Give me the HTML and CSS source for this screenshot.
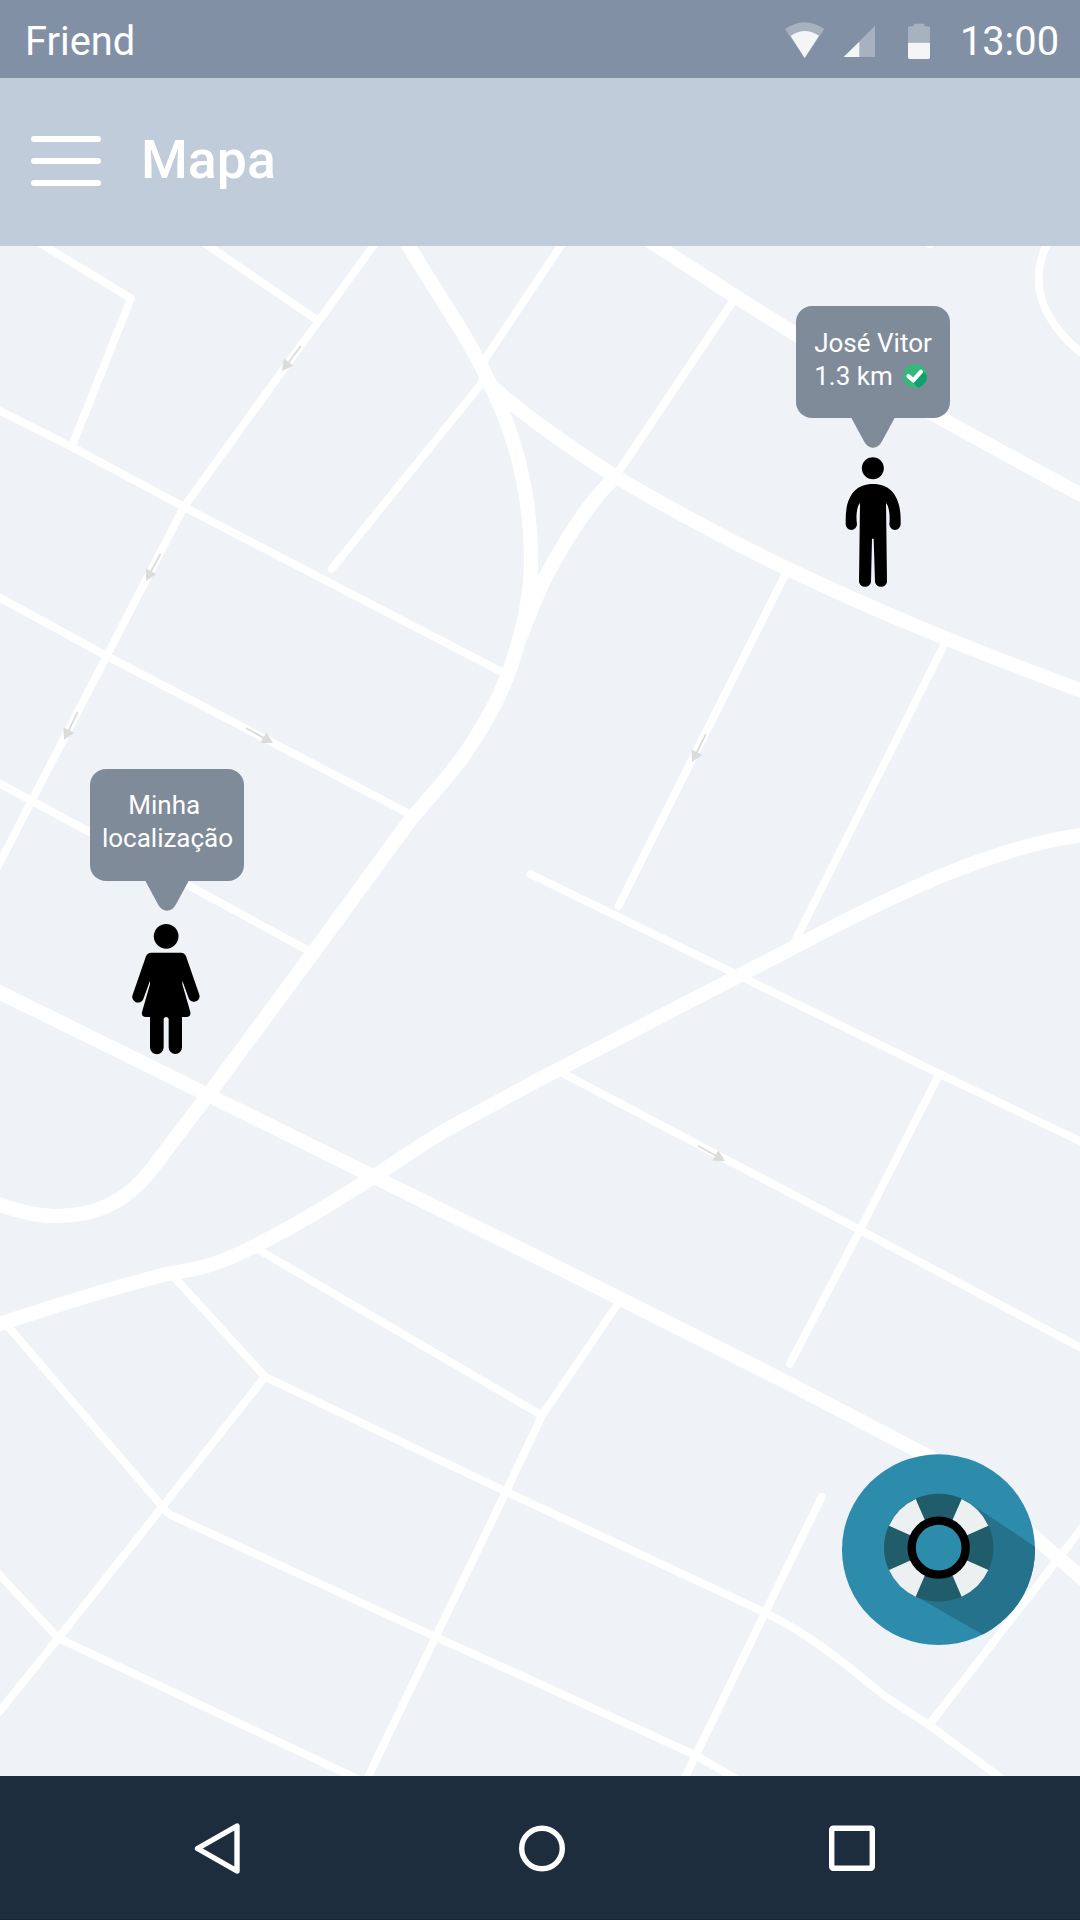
FILE: index.html
```html
<!DOCTYPE html>
<html lang="pt-BR">
<head>
<meta charset="utf-8">
<title>Friend</title>
<link rel="stylesheet" href="styles.css">
</head>
<body>
<div class="status">
  <span class="status-app">Friend</span>
  <svg class="status-icons" viewBox="132 60 444 120">
    <path class="dim" d="M135 87Q194 46 253 87L194 174Z"/>
    <path class="lit" d="M152 108Q194 78 237 107L194 174Z"/>
    <path class="dim" d="M405 77V171H311Z"/>
    <path class="lit" d="M358 125V171H311Z"/>
    <path class="dim" d="M521 71h32v8h12q5 0 5 5v44h-66V84q0-5 5-5h12z"/>
    <path class="lit" d="M504 128h66v44q0 5-5 5h-56q-5 0-5-5z"/>
  </svg>
  <span class="status-time">13:00</span>
</div>
<header class="header">
  <div class="menu"><i></i><i></i><i></i></div>
  <h1 class="title">Mapa</h1>
</header>
<main class="map">
  <svg class="roads" viewBox="0 246 1080 1530">
    <defs>
      <g id="arrow"><path d="M0 0L-11-6V6Z" fill="#dbdbdb"/><path d="M-10 0H-31" stroke="#dbdbdb" stroke-width="1.8"/></g>
    </defs>
    <g class="wide">
      <path d="M399 231L461 330C500 395 531 465 531 560C531 600 520 642 507 677C498 700 487 720 474 740C456 769 436 790 411 819L313 953L208 1095L151 1170C126 1202 96 1216 56 1216C34 1216 16 1211 -5 1203"/>
      <path d="M490 385C520 412 570 447 612 474.500C668 508 722 537 788 569C868 607 945 640 1090 694"/>
      <path d="M642 236L733 295L796 334.5Q860 376 1090 499.500"/>
      <path d="M615 478C600 490 576 521 547.600 573C538 592 529 615 521 636"/>
      <path d="M-5 990L208 1095L373.600 1176.700L557 1267L788 1383L925.700 1455C965 1476 995 1503 1035 1537.700L1090 1585"/>
      <path d="M-5 1325.500C60 1304 120 1285 172 1273C195 1269 205 1268 234 1256C300 1226 375 1176 405 1156C430 1139 435 1136 454 1125.500L540 1079L744 973L802 943C860 913 985 845 1090 834"/>
    </g>
    <g class="thin">
      <path d="M20 231L131 298.300L72 446"/>
      <path d="M186 230.500L317 320"/>
      <path d="M384 231L184 506.700L106.700 656L31.700 800.700L-5 872"/>
      <path d="M-5 408.500L72 447L184 507L500 671"/>
      <path d="M-5 595L106.700 656L411.500 815"/>
      <path d="M572 229L485 359L482 383L331.600 569"/>
      <path d="M733 301L619 471"/>
      <path d="M787 571L618.500 906"/>
      <path d="M946 641L793 945"/>
      <path d="M1049 240C1025 285 1045 324 1085 356"/>
      <path d="M930 234V244"/>
      <path d="M-5 781L89.500 832L187.700 885L309 951"/>
      <path d="M530.300 874L739.700 976L938.800 1073.500L1085 1143.500"/>
      <path d="M560.700 1072L860 1230L1085 1350"/>
      <path d="M938.800 1075L860 1230L789.700 1364"/>
      <path d="M174 1277L265 1376.700L506 1491.700L765.500 1612.700C815 1637 855 1672 886 1697L929 1725L1005 1781"/>
      <path d="M6 1324L162.500 1506.700Q166 1513 173 1516L435.600 1637L540 1684L695 1755L740 1781"/>
      <path d="M259 1250L542 1415.500L506 1491.700L435.600 1637L366 1781"/>
      <path d="M619 1302L542 1415.500"/>
      <path d="M265 1376.700L162.500 1506.700L58.500 1638L-5 1717"/>
      <path d="M-5 1570L58.500 1638.300L362 1781"/>
      <path d="M821.700 1496.700L765.500 1612L695 1756.700L683 1782"/>
      <path d="M1086 1523L929 1725"/>
    </g>
    <use href="#arrow" transform="translate(282 371) rotate(127)"/>
    <use href="#arrow" transform="translate(146 581) rotate(118)"/>
    <use href="#arrow" transform="translate(64 740) rotate(116)"/>
    <use href="#arrow" transform="translate(273 743) rotate(29)"/>
    <use href="#arrow" transform="translate(692 762) rotate(116.500)"/>
    <use href="#arrow" transform="translate(725 1161) rotate(29.500)"/>
  </svg>

  <div class="pin pin-friend">
    <div class="bubble">
      <div class="bubble-lines">
        <span>José Vitor</span>
        <span class="distance">1.3 km
          <svg class="check" viewBox="0 0 24 24">
            <clipPath id="badge"><circle cx="12" cy="12" r="12"/></clipPath>
            <circle cx="12" cy="12" r="12" fill="#35b87c"/>
            <path clip-path="url(#badge)" d="M9 17.500L19.500 7L26 13V26H17Z" fill="#0fa06e"/>
            <path d="M5.500 12.200L10.300 16.300L18 7.700" fill="none" stroke="#fff" stroke-width="4.200" stroke-linecap="round"/>
          </svg>
        </span>
      </div>
    </div>
    <svg class="tail" viewBox="0 0 45 31"><path d="M0 0H45L32 24Q28.500 31 22.500 31T13 24Z"/></svg>
    <svg class="man" viewBox="222 498 174 396">
      <circle cx="308.500" cy="532" r="33"/>
      <path d="M309 579C365 579 393 620 392 690V700A17 17 0 0 1 358 700C361 675 357 645 348 636L351 873A18.500 18.500 0 0 1 315 873L311 743H306L303 873A18.500 18.500 0 0 1 267 873L270 636C261 645 257 675 261 700A17 17 0 0 1 227 700V690C226 620 253 579 309 579Z"/>
    </svg>
  </div>

  <div class="pin pin-me">
    <div class="bubble">
      <div class="bubble-lines centered"><span>Minha&nbsp;</span><span>localização</span></div>
    </div>
    <svg class="tail" viewBox="0 0 45 31"><path d="M0 0H45L32 24Q28.500 31 22.500 31T13 24Z"/></svg>
    <svg class="woman" viewBox="183 519 210 396">
      <circle cx="288.500" cy="559" r="37"/>
      <path d="M244 608H333Q344 608 348 619L388 734A17 17 0 0 1 357 747L337 692V703L361 786Q363 801 349 801H336V892A20 20 0 0 1 296 892V806A8 8 0 0 0 281 806V892A20 20 0 0 1 240 892V801H228Q213 801 216 786L240 703V692L220 747A17 17 0 0 1 188 734L228 619Q232 608 244 608Z"/>
    </svg>
  </div>

  <svg class="help" viewBox="66 72 579 573">
    <clipPath id="disc"><ellipse cx="355.500" cy="359" rx="289.500" ry="286"/></clipPath>
    <ellipse cx="355.500" cy="359" rx="289.500" ry="286" fill="#2d8bac"/>
    <path clip-path="url(#disc)" d="M470 233L645 350V645H544L286 498Z" fill="#25728c"/>
    <ellipse cx="356" cy="353" rx="164" ry="162" fill="#215c6b"/>
    <g fill="#ecf0f1">
      <path id="wedge" d="M287 207L316 274L276 318L207 287A164 162 0 0 1 287 207Z"/>
      <use href="#wedge" transform="translate(712 0) scale(-1 1)"/>
      <use href="#wedge" transform="translate(0 707) scale(1 -1)"/>
      <use href="#wedge" transform="translate(712 707) scale(-1 -1)"/>
    </g>
    <circle cx="356" cy="353" r="81" fill="#2d8bac" stroke="#000" stroke-width="25"/>
  </svg>
</main>
<nav class="nav">
  <svg class="nav-icon" viewBox="0 0 46 52"><path d="M43 3V48L3.500 25.500Z"/></svg>
  <svg class="nav-icon" viewBox="0 0 46 52"><circle cx="23" cy="25.500" r="20.300"/></svg>
  <svg class="nav-icon" viewBox="0 0 46 52"><rect x="2.700" y="5.200" width="40.600" height="40" rx="1.500"/></svg>
</nav>
</body>
</html>
```
FILE: styles.css
```css
* { box-sizing: border-box; }
body {
  margin: 0;
  width: 1080px;
  height: 1920px;
  display: flex;
  flex-direction: column;
  overflow: hidden;
  font-family: Roboto, "Liberation Sans", sans-serif;
  color: #fff;
}
svg { display: block; flex: none; }

.status {
  height: 78px;
  padding: 0 21px 0 25px;
  display: flex;
  align-items: flex-start;
  background: #8290a6;
  font-size: 39.8px;
  line-height: 84px;
}
.status-app { flex: 1; }
.status-icons { width: 148px; height: 40px; margin: 20px 28px 0 0; }
.dim { fill: #a7b1c0; }
.lit { fill: #f3f5f7; }

.header {
  height: 168px;
  padding-left: 31px;
  display: flex;
  align-items: center;
  gap: 40px;
  background: #c0ccda;
}
.menu { width: 70px; display: flex; flex-direction: column; gap: 16px; margin-top: -2px; }
.menu i { height: 6px; border-radius: 3px; background: #fff; }
.title { margin: 0; font-size: 53.6px; font-weight: 500; line-height: 64px; margin-top: -4px; }

.map { position: relative; height: 1530px; background: #eff2f7; overflow: hidden; }
.roads { width: 1080px; height: 1530px; }
.wide, .thin { fill: none; stroke: #fff; stroke-linecap: round; stroke-linejoin: round; }
.wide { stroke-width: 14.2px; }
.thin { stroke-width: 7.8px; }

.pin { position: absolute; width: 154px; display: flex; flex-direction: column; align-items: center; }
.pin-friend { left: 796px; top: 60px; }
.pin-me { left: 90px; top: 523px; }
.bubble {
  width: 154px;
  height: 112px;
  padding-top: 21px;
  border-radius: 16px;
  background: #808b99;
  display: flex;
  justify-content: center;
  align-items: flex-start;
}
.pin-me .bubble { padding: 20px 0 0 1px; }
.bubble-lines { display: flex; flex-direction: column; font-size: 26px; line-height: 33px; white-space: nowrap; }
.centered { align-items: center; }
.distance { display: flex; align-items: center; gap: 10px; }
.check { width: 24px; height: 24px; margin-top: -1px; }
.tail { width: 44px; height: 31px; margin-top: -1px; fill: #808b99; }
.man { width: 58px; height: 132px; margin-top: 9px; }
.woman { width: 70px; height: 132px; margin: 12px 2px 0 0; }
.help { position: absolute; left: 842px; top: 1208px; width: 193px; height: 191px; }

.nav {
  height: 144px;
  padding: 2px 0 0 194px;
  display: flex;
  align-items: center;
  background: #1e2d3d;
  border-bottom: 1px solid #1b2338;
}
.nav-icon { width: 46px; height: 52px; margin-right: 279px; fill: none; stroke: #fff; stroke-width: 5.4px; stroke-linejoin: round; }
.nav-icon + .nav-icon { margin-right: 264px; }
```
